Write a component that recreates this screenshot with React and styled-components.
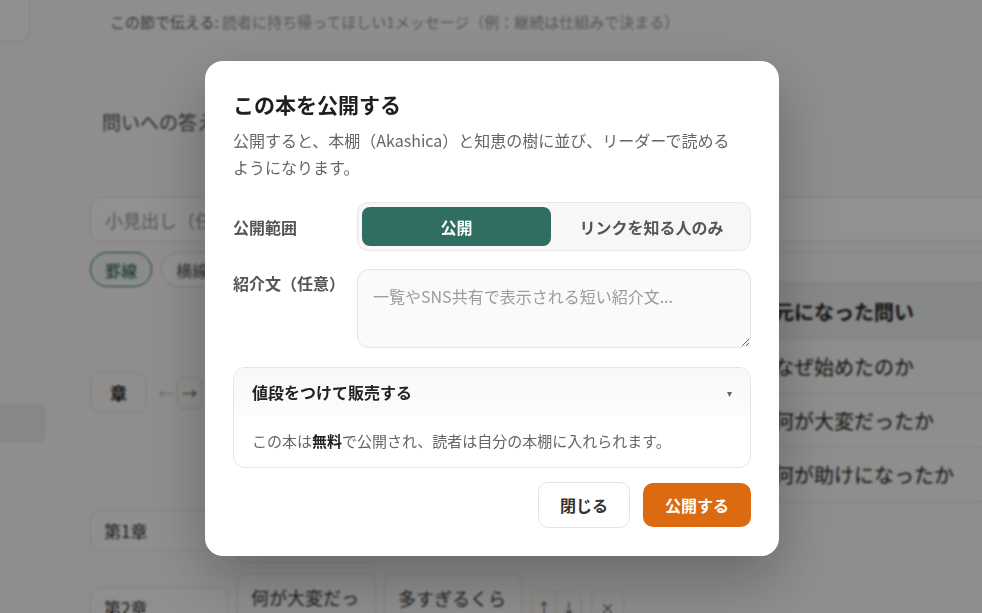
import React from "react";
import styled, { createGlobalStyle } from "styled-components";

const Global = createGlobalStyle`
  html, body { margin: 0; padding: 0; }
  body {
    font-family: "Noto Sans CJK JP", "Noto Sans", "Liberation Sans", sans-serif;
    color: #222;
  }
  * { box-sizing: border-box; }
`;

/* ---------- background page ---------- */
const Page = styled.div`
  display: flex;
  width: 100%;
  height: 100vh;
  overflow: hidden;
  background: #fbfaf8;
`;

const Sidebar = styled.aside`
  width: 46px;
  flex-shrink: 0;
  display: flex;
  flex-direction: column;
  & > * { flex-shrink: 0; }
`;

const TopCard = styled.div`
  width: 30px;
  height: 42px;
  background: #fdfdfc;
  border-right: 1px solid #e0e0de;
  border-bottom: 1px solid #e0e0de;
  border-bottom-right-radius: 12px;
`;

const NavItem = styled.div`
  margin-top: 361px;
  width: 46px;
  height: 40px;
  background: #eceeec;
  border-radius: 0 8px 8px 0;
`;

const Main = styled.main`
  flex: 1;
  min-width: 0;
  padding-left: 44px;
  display: flex;
  flex-direction: column;
  & > * { flex-shrink: 0; }
`;

const HintLine = styled.div`
  margin-top: 11px;
  padding-left: 20px;
  font-size: 15px;
  line-height: 22px;
  font-weight: 400;
  color: #6a6a6a;
  white-space: nowrap;
  span { color: #9a9a9a; }
`;

const Question = styled.div`
  margin-top: 75px;
  padding-left: 12px;
  font-size: 19px;
  line-height: 28px;
  color: #555;
  white-space: nowrap;
`;

const SubheadingInput = styled.input`
  margin-top: 61px;
  width: calc(100% + 20px);
  height: 45px;
  border: 1px solid #e2e2e0;
  border-radius: 10px;
  background: #fff;
  padding: 0 14px;
  font: inherit;
  font-size: 18px;
  &::placeholder { color: #9a9a9a; }
`;

const EditorArea = styled.div`
  display: flex;
  margin-top: 10px;
`;

const LeftCol = styled.div`
  width: 650px;
  flex-shrink: 0;
  display: flex;
  flex-direction: column;
  & > * { flex-shrink: 0; }
`;

const PillRow = styled.div`
  display: flex;
  gap: 9px;
`;

const Pill = styled.div`
  height: 35px;
  padding: 0 14px;
  display: flex;
  align-items: center;
  border-radius: 18px;
  font-size: 16px;
  border: 1px solid ${(p) => (p.$active ? "#2f6e60" : "#dcdcda")};
  color: ${(p) => (p.$active ? "#24584c" : "#555")};
  background: ${(p) => (p.$active ? "#f1f6f4" : "#fff")};
`;

const ChapterHeader = styled.div`
  margin-top: 85px;
  display: flex;
  align-items: center;
`;

const ChapterBox = styled.div`
  width: 57px;
  height: 41px;
  border: 1px solid #e0e0de;
  border-radius: 10px;
  display: grid;
  place-items: center;
  font-size: 17px;
  font-weight: 700;
  background: #fbfaf8;
`;

const ArrowGhost = styled.span`
  margin-left: 8px;
  width: 22px;
  text-align: center;
  font-size: 15px;
  color: #bdbdbd;
`;

const ArrowBox = styled.div`
  width: 25px;
  height: 32px;
  border: 1px solid #d6d6d4;
  border-radius: 6px;
  display: grid;
  place-items: center;
  font-size: 15px;
  color: #555;
`;

const Rows = styled.div`
  margin-top: 97px;
  display: flex;
  flex-direction: column;
  gap: 10px;
`;

const Row = styled.div`
  display: flex;
  align-items: flex-start;
  gap: 9px;
`;

const Cell = styled.div`
  width: ${(p) => p.$w || 138}px;
  height: ${(p) => p.$h || 45}px;
  margin-top: ${(p) => p.$offset || 0}px;
  border: 1px solid #e0e0de;
  border-radius: 10px;
  background: #fcfcfb;
  padding: ${(p) => (p.$small ? "7px 13px" : "10px 13px")};
  font-size: ${(p) => (p.$small ? 17 : 18)}px;
  line-height: 26px;
  color: #333;
  white-space: nowrap;
`;

const MoveGroup = styled.div`
  margin-top: 18px;
  display: flex;
  width: 51px;
  height: 32px;
  border: 1px solid #e0e0de;
  border-radius: 6px;
  overflow: hidden;
`;

const MoveBtn = styled.div`
  flex: 1;
  display: grid;
  place-items: center;
  font-size: 14px;
  color: #555;
  & + & { border-left: 1px solid #e0e0de; }
`;

const SmallBtn = styled.div`
  margin-top: 18px;
  width: 33px;
  height: 32px;
  border: 1px solid #e0e0de;
  border-radius: 6px;
  display: grid;
  place-items: center;
  font-size: 14px;
  color: #555;
`;

const TocPanel = styled.div`
  flex: 1;
  min-width: 0;
  display: flex;
  flex-direction: column;
  & > * { flex-shrink: 0; }
`;

const TocHeader = styled.div`
  height: 31px;
  border-top: 1px solid #e4e4e2;
  border-bottom: 1px solid #e4e4e2;
`;

const TocItem = styled.div`
  height: ${(p) => (p.$active ? 57 : 54)}px;
  padding-left: 34px;
  display: flex;
  align-items: center;
  font-size: 20px;
  white-space: nowrap;
  font-weight: ${(p) => (p.$active ? 700 : 400)};
  background: ${(p) => (p.$active ? "#eef1ee" : "transparent")};
  border-bottom: 1px solid #e6e6e4;
  color: #222;
`;

/* ---------- modal ---------- */
const Overlay = styled.div`
  position: fixed;
  inset: 0;
  background: rgba(0, 0, 0, 0.43);
  backdrop-filter: blur(0.8px);
  display: flex;
  align-items: center;
  justify-content: center;
`;

const Modal = styled.div`
  width: 574px;
  margin: 4px 0 0 2px;
  background: #fff;
  border-radius: 18px;
  padding: 29px 28px 28px;
  box-shadow: 0 24px 60px rgba(0, 0, 0, 0.28);
`;

const Title = styled.h2`
  margin: 0;
  font-size: 21px;
  line-height: 28px;
  font-weight: 700;
  color: #1f1f1f;
`;

const Desc = styled.p`
  margin: 9px 0 0;
  max-width: 508px;
  font-size: 16px;
  line-height: 27px;
  color: #666;
`;

const FieldRow = styled.div`
  display: grid;
  grid-template-columns: 124px 1fr;
  align-items: ${(p) => (p.$top ? "start" : "center")};
  margin-top: ${(p) => p.$mt}px;
`;

const Label = styled.label`
  font-size: 16px;
  line-height: 24px;
  font-weight: 600;
  color: #555;
  padding-top: ${(p) => (p.$top ? 2 : 0)}px;
`;

const Segmented = styled.div`
  display: grid;
  grid-template-columns: 1fr 1fr;
  gap: 6px;
  height: 49px;
  padding: 4px;
  border: 1px solid #e8e8e8;
  border-radius: 11px;
  background: #f7f7f7;
`;

const SegOption = styled.button`
  border: none;
  border-radius: 8px;
  font: inherit;
  font-size: 16px;
  font-weight: 700;
  cursor: pointer;
  background: ${(p) => (p.$active ? "#2f6e60" : "transparent")};
  color: ${(p) => (p.$active ? "#fff" : "#555")};
`;

const TextArea = styled.textarea`
  display: block;
  width: 100%;
  height: 79px;
  padding: 14px 15px;
  border: 1px solid #e3e3e3;
  border-radius: 12px;
  background: #fafafa;
  font: inherit;
  font-size: 16px;
  line-height: 24px;
  resize: vertical;
  &::placeholder { color: #9b9b9b; }
`;

const Details = styled.details`
  margin-top: 19px;
  border: 1px solid #e6e6e6;
  border-radius: 12px;
  overflow: hidden;
`;

const Summary = styled.summary`
  list-style: none;
  height: 48px;
  padding: 0 18px;
  display: flex;
  align-items: center;
  justify-content: space-between;
  background: linear-gradient(#f8f8f8, #fcfcfc);
  font-size: 16px;
  font-weight: 700;
  color: #222;
  cursor: pointer;
  &::-webkit-details-marker { display: none; }
`;

const Caret = styled.span`
  font-size: 10px;
  color: #666;
  font-weight: 400;
`;

const DetailsBody = styled.div`
  padding: 13px 18px 14px;
  font-size: 15px;
  line-height: 24px;
  color: #666;
  b { color: #222; font-weight: 700; }
`;

const Actions = styled.div`
  margin-top: 14px;
  display: flex;
  justify-content: flex-end;
  align-items: center;
  gap: 13px;
`;

const Button = styled.button`
  height: ${(p) => (p.$primary ? 44 : 46)}px;
  padding: 0 ${(p) => (p.$primary ? 22 : 21)}px;
  border-radius: 10px;
  font: inherit;
  font-size: 16px;
  font-weight: 700;
  cursor: pointer;
  border: ${(p) => (p.$primary ? "none" : "1px solid #e3e3e3")};
  background: ${(p) => (p.$primary ? "#dc6a10" : "#fff")};
  color: ${(p) => (p.$primary ? "#fff" : "#333")};
`;

export default function App() {
  return (
    <>
      <Global />
      <Page>
        <Sidebar>
          <TopCard />
          <NavItem />
        </Sidebar>
        <Main>
          <HintLine>
            この節で伝える: <span>読者に持ち帰ってほしい1メッセージ（例：継続は仕組みで決まる）</span>
          </HintLine>
          <Question>問いへの答え</Question>
          <SubheadingInput placeholder="小見出し（任意）" readOnly />
          <EditorArea>
            <LeftCol>
              <PillRow>
                <Pill $active>罫線</Pill>
                <Pill>横線</Pill>
              </PillRow>
              <ChapterHeader>
                <ChapterBox>章</ChapterBox>
                <ArrowGhost>←</ArrowGhost>
                <ArrowBox>→</ArrowBox>
              </ChapterHeader>
              <Rows>
                <Row>
                  <Cell $small $h={41}>第1章</Cell>
                  <Cell $h={53} />
                  <Cell $h={44} />
                </Row>
                <Row>
                  <Cell $small $h={41} $offset={14}>第2章</Cell>
                  <Cell $h={53}>何が大変だっ</Cell>
                  <Cell $h={53} $offset={1}>多すぎるくら</Cell>
                  <MoveGroup>
                    <MoveBtn>↑</MoveBtn>
                    <MoveBtn>↓</MoveBtn>
                  </MoveGroup>
                  <SmallBtn>×</SmallBtn>
                </Row>
              </Rows>
            </LeftCol>
            <TocPanel>
              <TocHeader />
              <TocItem $active>元になった問い</TocItem>
              <TocItem>なぜ始めたのか</TocItem>
              <TocItem>何が大変だったか</TocItem>
              <TocItem>何が助けになったか</TocItem>
            </TocPanel>
          </EditorArea>
        </Main>
      </Page>

      <Overlay>
        <Modal role="dialog" aria-modal="true">
          <Title>この本を公開する</Title>
          <Desc>
            公開すると、本棚（Akashica）と知恵の樹に並び、リーダーで読めるようになります。
          </Desc>
          <FieldRow $mt={21}>
            <Label>公開範囲</Label>
            <Segmented>
              <SegOption $active>公開</SegOption>
              <SegOption>リンクを知る人のみ</SegOption>
            </Segmented>
          </FieldRow>
          <FieldRow $mt={18} $top>
            <Label $top>紹介文（任意）</Label>
            <TextArea placeholder="一覧やSNS共有で表示される短い紹介文..." />
          </FieldRow>
          <Details open>
            <Summary>
              値段をつけて販売する
              <Caret>▾</Caret>
            </Summary>
            <DetailsBody>
              この本は<b>無料</b>で公開され、読者は自分の本棚に入れられます。
            </DetailsBody>
          </Details>
          <Actions>
            <Button>閉じる</Button>
            <Button $primary>公開する</Button>
          </Actions>
        </Modal>
      </Overlay>
    </>
  );
}
